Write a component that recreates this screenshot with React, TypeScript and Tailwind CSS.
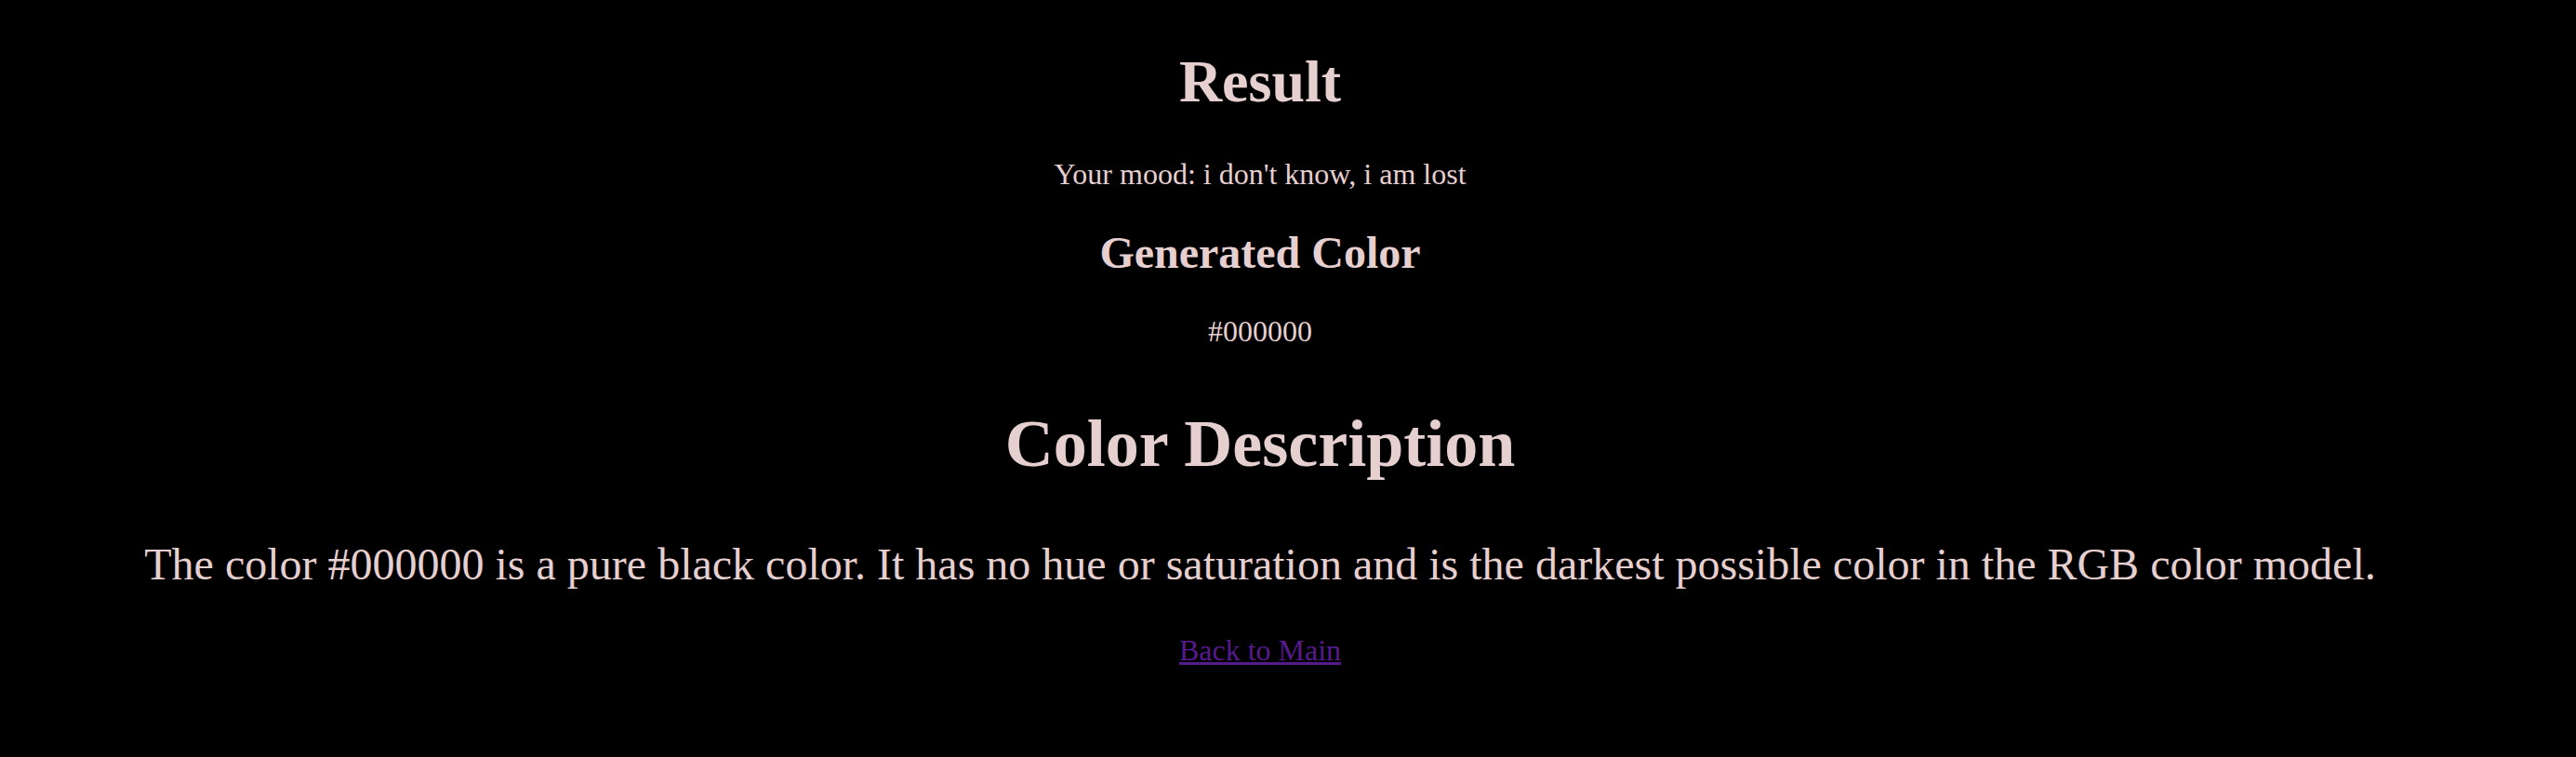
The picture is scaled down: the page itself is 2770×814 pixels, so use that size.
const mood = "i don't know, i am lost";
const hex = "#000000";

export default function App() {
  return (
    <div className="min-h-screen w-full bg-black pl-4 pr-[76px] pt-[51px] text-center font-['Liberation_Serif','Times_New_Roman',serif] text-[#e6cfcf]">
      <h1 className="text-[64px] font-bold leading-[normal]">Result</h1>
      <p className="mt-[44px] text-[32px] leading-[normal]">Your mood: {mood}</p>
      <h2 className="mt-[38px] text-[48px] font-bold leading-[normal]">Generated Color</h2>
      <p className="mt-[39px] text-[32px] leading-[normal]">{hex}</p>
      <div className="h-0 w-full" style={{ backgroundColor: hex }} />
      <h1 className="mt-[61px] text-[72px] font-bold leading-[normal]">Color Description</h1>
      <p className="mt-[60px] text-[48px] leading-[normal]">
        The color {hex} is a pure black color. It has no hue or saturation and is the darkest possible color in the RGB color model.
      </p>
      <p className="mt-[47px] text-[32px] leading-[normal]">
        <a href="#" className="text-[#551a8b] underline">
          Back to Main
        </a>
      </p>
    </div>
  );
}
